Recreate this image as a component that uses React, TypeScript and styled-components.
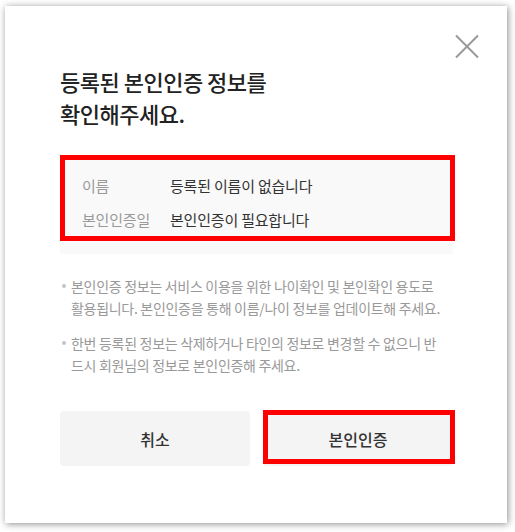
import styled, { createGlobalStyle } from "styled-components";

const GlobalStyle = createGlobalStyle`
	html, body {
		margin: 0;
		padding: 0;
		background: #ffffff;
	}
	body {
		font-family: "Noto Sans CJK KR", "Noto Sans", sans-serif;
		color: #222;
	}
`;

const Page = styled.div`
	width: 515px;
	height: 532px;
	padding: 6px 8px 9px 5px;
	box-sizing: border-box;
`;

const Modal = styled.div`
	position: relative;
	height: 100%;
	box-sizing: border-box;
	background: #fff;
	box-shadow: 1px 1px 7px rgba(0, 0, 0, 0.45);
	padding: 59px 54px 0 55px;
	display: flex;
	flex-direction: column;
`;

const CloseButton = styled.button`
	position: absolute;
	top: 28px;
	right: 28px;
	width: 24px;
	height: 25px;
	padding: 0;
	border: 0;
	background: none;
	cursor: pointer;
	display: flex;
`;

const Title = styled.h2`
	margin: 0;
	font-size: 22px;
	line-height: 32px;
	font-weight: 500;
	letter-spacing: -0.5px;
	color: #222;
`;

const InfoWrap = styled.div`
	position: relative;
	margin-top: 27px;
`;

const InfoBox = styled.dl`
	margin: 0;
	padding: 20px 22px 24px;
	background: #f9f9f9;
	display: grid;
	grid-template-columns: 88px 1fr;
	row-gap: 14px;
	font-size: 15px;
	line-height: 20px;
	letter-spacing: -0.2px;
`;

const Label = styled.dt`
	color: #999;
`;

const Value = styled.dd`
	margin: 0;
	color: #333;
`;

const Highlight = styled.div<{ $bottom?: number; $right?: number }>`
	position: absolute;
	top: -1px;
	left: 0;
	right: ${(p) => p.$right ?? 0}px;
	bottom: ${(p) => p.$bottom ?? 0}px;
	border: 5px solid #ff0000;
	pointer-events: none;
`;

const Notes = styled.ul`
	list-style: none;
	margin: 21px 0 0;
	padding: 0 8px 0 11px;
	display: flex;
	flex-direction: column;
	gap: 13px;
`;

const Note = styled.li`
	position: relative;
	font-size: 14px;
	line-height: 22px;
	letter-spacing: -0.3px;
	color: #999;

	&::before {
		content: "";
		position: absolute;
		left: -9px;
		top: 9px;
		width: 4px;
		height: 4px;
		border-radius: 50%;
		background: #c4c4c4;
	}
`;

const Buttons = styled.div`
	margin-top: 35px;
	display: grid;
	grid-template-columns: 1fr 1fr;
	gap: 13px;
`;

const ButtonWrap = styled.div`
	position: relative;
`;

const Button = styled.button`
	width: 100%;
	height: 55px;
	border: 0;
	border-radius: 4px;
	background: #f4f4f4;
	font-family: inherit;
	font-size: 16px;
	font-weight: 500;
	color: #333;
	cursor: pointer;
`;

export default function App() {
	return (
		<>
			<GlobalStyle />
			<Page>
				<Modal>
					<CloseButton aria-label="닫기">
						<svg width="24" height="25" viewBox="0 0 24 25">
							<path
								d="M1 1.5L23 23.5M23 1.5L1 23.5"
								stroke="#999"
								strokeWidth="2"
								fill="none"
							/>
						</svg>
					</CloseButton>
					<Title>
						등록된 본인인증 정보를
						<br />
						확인해주세요.
					</Title>
					<InfoWrap>
						<InfoBox>
							<Label>이름</Label>
							<Value>등록된 이름이 없습니다</Value>
							<Label>본인인증일</Label>
							<Value>본인인증이 필요합니다</Value>
						</InfoBox>
						<Highlight $bottom={13} $right={-2} />
					</InfoWrap>
					<Notes>
						<Note>
							본인인증 정보는 서비스 이용을 위한 나이확인 및 본인확인 용도로
							활용됩니다. 본인인증을 통해 이름/나이 정보를 업데이트해 주세요.
						</Note>
						<Note>
							한번 등록된 정보는 삭제하거나 타인의 정보로 변경할 수 없으니
							반드시 회원님의 정보로 본인인증해 주세요.
						</Note>
					</Notes>
					<Buttons>
						<ButtonWrap>
							<Button>취소</Button>
						</ButtonWrap>
						<ButtonWrap>
							<Button>본인인증</Button>
							<Highlight $bottom={2} $right={-2} />
						</ButtonWrap>
					</Buttons>
				</Modal>
			</Page>
		</>
	);
}
